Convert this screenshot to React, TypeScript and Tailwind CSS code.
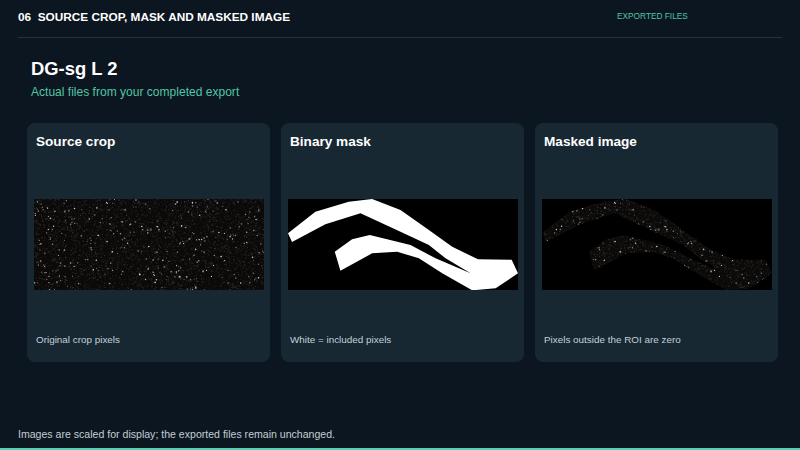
import { useId } from 'react';

const MASK =
  '38,130 120,65 220,35 290,27 375,60 460,120 530,170 607,208 708,209 727,250 660,295 590,301 500,250 430,205 365,185 290,190 195,242 178,185 230,148 283,135 405,165 480,205 585,250 510,205 460,165 375,125 255,70 150,103 50,156';

type Dot = { x: number; y: number; r: number; c: string };

function makeDots() {
  let seed = 20240611;
  const rnd = () => {
    seed = (seed * 1664525 + 1013904223) % 4294967296;
    return seed / 4294967296;
  };
  const dots: Dot[] = [];
  for (let i = 0; i < 4200; i++) {
    const v = 24 + Math.floor(rnd() * 34);
    dots.push({ x: 38 + rnd() * 689, y: 27 + rnd() * 273, r: 0.9 + rnd() * 1.1, c: `rgb(${v},${v},${v})` });
  }
  for (let i = 0; i < 330; i++) {
    const v = 100 + Math.floor(rnd() * 120);
    dots.push({ x: 38 + rnd() * 689, y: 27 + rnd() * 273, r: 1.3 + rnd() * 1.2, c: `rgb(${v},${v},${v})` });
  }
  return dots;
}

const dots = makeDots();

function Frame({ children }: { children: React.ReactNode }) {
  return (
    <svg viewBox="38 27 689 273" preserveAspectRatio="none" className="block w-[230px] h-[91px]">
      {children}
    </svg>
  );
}

function Speckle() {
  const id = useId();
  return (
    <>
      <filter id={id} x="0" y="0" width="1" height="1">
        <feGaussianBlur stdDeviation="0.9" />
      </filter>
      <g filter={`url(#${id})`}>
        {dots.map((d, i) => (
          <circle key={i} cx={d.x} cy={d.y} r={d.r} fill={d.c} />
        ))}
      </g>
    </>
  );
}

function SourceImage() {
  return (
    <Frame>
      <rect x="38" y="27" width="689" height="273" fill="#0b0a09" />
      <Speckle />
    </Frame>
  );
}

function MaskImage() {
  return (
    <Frame>
      <rect x="38" y="27" width="689" height="273" fill="#000" />
      <polygon points={MASK} fill="#fff" />
    </Frame>
  );
}

function MaskedImage() {
  const id = useId();
  return (
    <Frame>
      <defs>
        <clipPath id={id}>
          <polygon points={MASK} />
        </clipPath>
      </defs>
      <rect x="38" y="27" width="689" height="273" fill="#000" />
      <g clipPath={`url(#${id})`}>
        <rect x="38" y="27" width="689" height="273" fill="#0b0a09" />
        <Speckle />
      </g>
    </Frame>
  );
}

function Card({ title, caption, children }: { title: string; caption: string; children: React.ReactNode }) {
  return (
    <div className="w-[243px] h-[239px] rounded-lg bg-[#182833] flex flex-col">
      <h2 className="pl-[9px] pt-[10px] text-[13.6px] leading-[18px] font-bold text-white">{title}</h2>
      <div className="mt-[48px] pl-[6.67px]">{children}</div>
      <p className="mt-[44px] pl-[9px] text-[9.9px] leading-[12px] text-[#c3d0d8]">{caption}</p>
    </div>
  );
}

export default function App() {
  return (
    <div className="w-[800px] h-[450px] overflow-hidden bg-[#0c1620] flex flex-col font-['Liberation_Sans',Arial,sans-serif]">
      <header className="mx-[18px] h-[38px] shrink-0 border-b border-[#24323b] flex items-start pt-[10px]">
        <span className="w-[599px] text-[11.8px] leading-[14px] font-bold text-white whitespace-pre">
          06{'  '}SOURCE CROP, MASK AND MASKED IMAGE
        </span>
        <span className="text-[8.3px] leading-[12px] text-[#52c4a6]">EXPORTED FILES</span>
      </header>
      <section className="pl-[31px] pt-[20px]">
        <h1 className="text-[18.4px] leading-[22px] font-bold text-white">DG-sg L 2</h1>
        <p className="mt-[5px] text-[12.05px] leading-[14px] text-[#52c4a6]">Actual files from your completed export</p>
      </section>
      <div className="mt-[24px] pl-[27px] flex gap-[11px]">
        <Card title="Source crop" caption="Original crop pixels">
          <SourceImage />
        </Card>
        <Card title="Binary mask" caption="White = included pixels">
          <MaskImage />
        </Card>
        <Card title="Masked image" caption="Pixels outside the ROI are zero">
          <MaskedImage />
        </Card>
      </div>
      <p className="mt-auto pl-[18px] pb-[8px] text-[10.57px] leading-[12px] text-[#c3cdd4]">
        Images are scaled for display; the exported files remain unchanged.
      </p>
      <div className="h-[2px] shrink-0 bg-[#4fd1b5]" />
    </div>
  );
}
